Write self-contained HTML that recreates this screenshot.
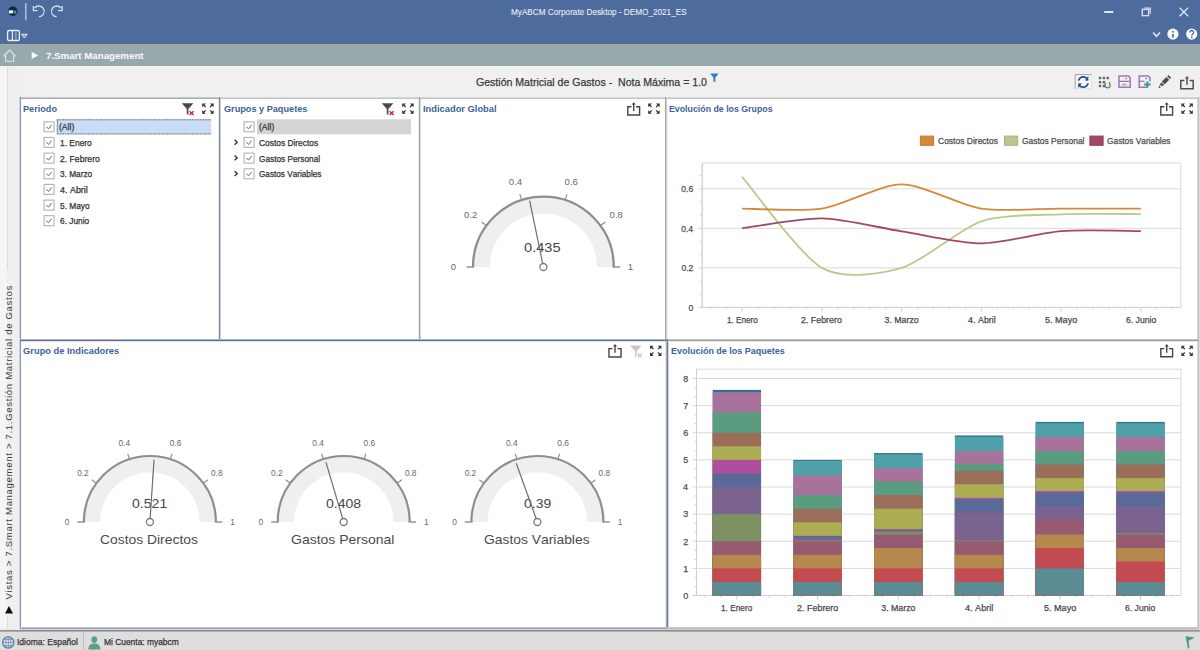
<!DOCTYPE html>
<html><head><meta charset="utf-8"><title>MyABCM</title>
<style>
*{box-sizing:border-box}
html,body{margin:0;padding:0}
body{width:1200px;height:650px;position:relative;overflow:hidden;background:#f0f0f0;font-family:"Liberation Sans",sans-serif;color:#333}
.abs{position:absolute}
.t{position:absolute;white-space:nowrap;line-height:1;font-kerning:none;-webkit-text-stroke:0.25px currentColor}
svg.ov{position:absolute;left:0;top:0}
</style></head><body>

<div class="abs" style="left:0px;top:0px;width:1200px;height:44px;background:#4d6b9c"></div>
<div class="abs" style="left:0px;top:44px;width:1200px;height:1px;background:#a2a8ae"></div>
<div class="abs" style="left:0px;top:45px;width:1200px;height:1px;background:#9ea8ad"></div>
<div class="abs" style="left:0px;top:46px;width:1200px;height:19px;background:#97a9ad"></div>
<div class="abs" style="left:0px;top:65px;width:1200px;height:1px;background:#92a7a9"></div>
<div class="abs" style="left:0px;top:66px;width:1200px;height:1px;background:#f6f0f0"></div>
<div class="t" style="left:511.43px;top:6.80px;font-size:9.4px;color:#e8edf5;font-weight:normal;font-family:'Liberation Sans', sans-serif;transform:scaleX(0.8733);transform-origin:0 0;-webkit-text-stroke:0.1px currentColor;">MyABCM Corporate Desktop - DEMO_2021_ES</div>
<div class="t" style="left:45.88px;top:50.60px;font-size:9.8px;color:#fbfbfb;font-weight:bold;font-family:'Liberation Sans', sans-serif;transform:scaleX(0.9897);transform-origin:0 0;-webkit-text-stroke:0;">7.Smart Management</div>
<div class="abs" style="left:0px;top:67px;width:7px;height:563px;background:#f5f5f5"></div>
<div class="abs" style="left:7px;top:67px;width:1px;height:203px;background:#dcdcdc"></div>
<div class="abs" style="left:7px;top:615px;width:1px;height:15px;background:#dcdcdc"></div>
<div class="abs" style="left:8px;top:67px;width:10px;height:563px;background:#efefef"></div>
<div class="abs" style="left:18px;top:67px;width:1px;height:563px;background:#f4f0f0"></div>
<div class="t" style="left:475.77px;top:76.50px;font-size:11.0px;color:#3a3a3a;font-weight:normal;font-family:'Liberation Sans', sans-serif;transform:scaleX(0.9600);transform-origin:0 0;">Gestión Matricial de Gastos -  Nota Máxima = 1.0</div>
<div class="abs" style="left:0px;top:628px;width:1200px;height:2px;background:#ececec"></div>
<div class="abs" style="left:0px;top:630px;width:1200px;height:1px;background:#8f9090"></div>
<div class="abs" style="left:0px;top:631px;width:1200px;height:1px;background:#acaaac"></div>
<div class="abs" style="left:0px;top:632px;width:1200px;height:18px;background:#dedede"></div>
<div class="t" style="left:17.12px;top:637.50px;font-size:9.0px;color:#333;font-weight:normal;font-family:'Liberation Sans', sans-serif;transform:scaleX(0.9443);transform-origin:0 0;">Idioma: Español</div>
<div class="abs" style="left:83px;top:632px;width:1px;height:18px;background:#bdbdbd"></div>
<div class="t" style="left:103.81px;top:637.50px;font-size:9.0px;color:#333;font-weight:normal;font-family:'Liberation Sans', sans-serif;transform:scaleX(0.9339);transform-origin:0 0;">Mi Cuenta: myabcm</div>
<div class="abs" style="left:21px;top:99px;width:1177px;height:528px;background:#ffffff"></div>
<div class="abs" style="left:20px;top:97px;width:200px;height:1px;background:#c6ccd6"></div>
<div class="abs" style="left:20px;top:98px;width:200px;height:1px;background:#a3a9b5"></div>
<div class="abs" style="left:220px;top:97px;width:979px;height:1px;background:#d6d6d6"></div>
<div class="abs" style="left:220px;top:98px;width:979px;height:1px;background:#c4c4c4"></div>
<div class="abs" style="left:19px;top:97px;width:1px;height:532px;background:#c8d4e4"></div>
<div class="abs" style="left:20px;top:97px;width:1px;height:532px;background:#8795ad"></div>
<div class="abs" style="left:218px;top:99px;width:1px;height:241px;background:#e6edf6"></div>
<div class="abs" style="left:219px;top:97px;width:1px;height:243px;background:#7a8496"></div>
<div class="abs" style="left:220px;top:99px;width:1px;height:241px;background:#cdd0d8"></div>
<div class="abs" style="left:418px;top:99px;width:1px;height:241px;background:#ececec"></div>
<div class="abs" style="left:419px;top:97px;width:1px;height:243px;background:#a3a3a3"></div>
<div class="abs" style="left:420px;top:99px;width:1px;height:241px;background:#d8d8d8"></div>
<div class="abs" style="left:665px;top:97px;width:1px;height:243px;background:#a2a2a2"></div>
<div class="abs" style="left:666px;top:97px;width:1px;height:243px;background:#d2d2d2"></div>
<div class="abs" style="left:667px;top:99px;width:1px;height:240px;background:#f2f2f2"></div>
<div class="abs" style="left:1197px;top:97px;width:1px;height:532px;background:#dadada"></div>
<div class="abs" style="left:1198px;top:97px;width:1px;height:532px;background:#c0c0c0"></div>
<div class="abs" style="left:1199px;top:97px;width:1px;height:532px;background:#dcdcdc"></div>
<div class="abs" style="left:20px;top:339px;width:647px;height:1px;background:#a9b6ca"></div>
<div class="abs" style="left:20px;top:340px;width:647px;height:1px;background:#5c7199"></div>
<div class="abs" style="left:21px;top:341px;width:645px;height:1px;background:#dfe5ee"></div>
<div class="abs" style="left:668px;top:339px;width:531px;height:1px;background:#c0c0c0"></div>
<div class="abs" style="left:668px;top:340px;width:531px;height:1px;background:#a0a0a0"></div>
<div class="abs" style="left:669px;top:341px;width:529px;height:1px;background:#e6e6e6"></div>
<div class="abs" style="left:665px;top:342px;width:1px;height:285px;background:#e4e9f0"></div>
<div class="abs" style="left:666px;top:341px;width:1px;height:287px;background:#a5aec4"></div>
<div class="abs" style="left:667px;top:339px;width:1px;height:290px;background:#747b96"></div>
<div class="abs" style="left:668px;top:342px;width:1px;height:285px;background:#d0d4dc"></div>
<div class="abs" style="left:20px;top:627px;width:648px;height:1px;background:#b8c2d0"></div>
<div class="abs" style="left:20px;top:628px;width:648px;height:1px;background:#98a4b8"></div>
<div class="abs" style="left:20px;top:629px;width:648px;height:1px;background:#d0d4d6"></div>
<div class="abs" style="left:668px;top:627px;width:531px;height:1px;background:#c8c8c8"></div>
<div class="abs" style="left:668px;top:628px;width:531px;height:1px;background:#c0c0c0"></div>
<div class="abs" style="left:668px;top:629px;width:531px;height:1px;background:#d0d0d0"></div>
<div class="t" style="left:23.39px;top:105.35px;font-size:9.3px;color:#3d619a;font-weight:bold;font-family:'Liberation Sans', sans-serif;transform:scaleX(0.9814);transform-origin:0 0;-webkit-text-stroke:0;">Periodo</div>
<div class="t" style="left:223.52px;top:105.35px;font-size:9.3px;color:#3d619a;font-weight:bold;font-family:'Liberation Sans', sans-serif;transform:scaleX(0.9837);transform-origin:0 0;-webkit-text-stroke:0;">Grupos y Paquetes</div>
<div class="t" style="left:422.88px;top:105.35px;font-size:9.3px;color:#3d619a;font-weight:bold;font-family:'Liberation Sans', sans-serif;transform:scaleX(1.0031);transform-origin:0 0;-webkit-text-stroke:0;">Indicador Global</div>
<div class="t" style="left:669.31px;top:105.35px;font-size:9.3px;color:#3d619a;font-weight:bold;font-family:'Liberation Sans', sans-serif;transform:scaleX(0.9455);transform-origin:0 0;-webkit-text-stroke:0;">Evolución de los Grupos</div>
<div class="t" style="left:23.12px;top:347.35px;font-size:9.3px;color:#3d619a;font-weight:bold;font-family:'Liberation Sans', sans-serif;-webkit-text-stroke:0;">Grupo de Indicadores</div>
<div class="t" style="left:671.10px;top:347.35px;font-size:9.3px;color:#3d619a;font-weight:bold;font-family:'Liberation Sans', sans-serif;transform:scaleX(0.9650);transform-origin:0 0;-webkit-text-stroke:0;">Evolución de los Paquetes</div>
<div class="abs" style="left:0px;top:42px;width:1200px;height:1px;background:#4a6b9f"></div>
<div class="abs" style="left:0px;top:43px;width:1200px;height:1px;background:#5a6c8a"></div>
<svg class="ov" width="1200" height="650" viewBox="0 0 1200 650"><circle cx="12.8" cy="11.2" r="4.7" fill="#0f2452"/><rect x="8.8" y="10.3" width="4.4" height="3.1" fill="#f4f6f0"/><rect x="14.2" y="10.6" width="2.1" height="3" fill="#5cb040"/><line x1="25.8" y1="3" x2="25.8" y2="20.2" stroke="#b9c8df" stroke-width="1.4"/><path d="M34.6 8.2 A5.3 5.3 0 1 1 38.9 16.6" fill="none" stroke="#d3dbec" stroke-width="1.3"/><path d="M33.4 5.9 L33.4 10.6 L37.6 10.6" fill="none" stroke="#d3dbec" stroke-width="1.4"/><path d="M61.0 8.2 A5.3 5.3 0 1 0 56.7 16.6" fill="none" stroke="#d3dbec" stroke-width="1.3"/><path d="M62.2 5.9 L62.2 10.6 L58.0 10.6" fill="none" stroke="#d3dbec" stroke-width="1.4"/><rect x="7.6" y="30.5" width="11.8" height="10" rx="1.6" fill="none" stroke="#eef2fa" stroke-width="1.3"/><line x1="12.4" y1="31" x2="12.4" y2="40.2" stroke="#eef2fa" stroke-width="1.1"/><line x1="15.9" y1="32" x2="15.9" y2="39.5" stroke="#aab8d6" stroke-width="1"/><path d="M21.6 34.3 L27.1 34.3 L24.35 38 Z" fill="#8090b8" stroke="#eef2fa" stroke-width="1"/><rect x="1104.2" y="11" width="9.2" height="2" fill="#dfe5f3"/><rect x="1142.3" y="9.3" width="6.3" height="6.4" fill="none" stroke="#dfe5f3" stroke-width="1.3"/><path d="M1144.2 8.0 L1150.2 8.0 L1150.2 13.8" fill="none" stroke="#dfe5f3" stroke-width="1.2"/><path d="M1179.6 7.6 L1188.2 16.2 M1188.2 7.6 L1179.6 16.2" stroke="#e6ebf6" stroke-width="1.3"/><path d="M1153 32.6 L1156.5 36.3 L1160 32.6" fill="none" stroke="#e6ebf6" stroke-width="1.5"/><circle cx="1172.9" cy="34.1" r="5.6" fill="#fafbfd"/><rect x="1172.1" y="34" width="1.7" height="3.6" fill="#4f6a98"/><rect x="1172.1" y="30.9" width="1.7" height="1.7" fill="#4f6a98"/><circle cx="1191.7" cy="34.1" r="5.6" fill="#fafbfd"/><path d="M1189.8 32.4 A1.95 1.95 0 1 1 1192.6 34.2 Q1191.7 34.7 1191.7 35.8" fill="none" stroke="#4f6a98" stroke-width="1.3"/><rect x="1191" y="36.6" width="1.5" height="1.5" fill="#4f6a98"/><path d="M3.9 56 L9.6 50 L15.3 56 L13.6 56 L13.6 61.2 L5.6 61.2 L5.6 56 Z" fill="none" stroke="#dfe6e7" stroke-width="1.1" stroke-linejoin="round"/><path d="M31.7 51.8 L38 55.4 L31.7 59 Z" fill="#fbfbfb"/><text x="0" y="0" transform="translate(12 599.4) rotate(-90)" font-family="Liberation Sans" font-size="9.6" fill="#3b3b3b" textLength="313.6" lengthAdjust="spacing">Vistas &gt; 7.Smart Management &gt; 7.1.Gestión Matricial de Gastos</text><path d="M5 613.5 L9 606 L13 613.5 Z" fill="#111"/><path d="M710.2 73.4 L718.6 73.4 L715.4 77.4 L715.4 81.8 L713.4 81.8 L713.4 77.4 Z" fill="#3a78c0"/><rect x="1075" y="74.5" width="16.6" height="14.3" fill="#f7f7f7"/><path d="M1075.2 88.8 L1075.2 74.6 L1091.6 74.6" fill="none" stroke="#a4a4a4" stroke-width="1"/><path d="M1075.6 88.6 L1091.6 88.6 L1091.6 74.9" fill="none" stroke="#e2e2e2" stroke-width="1"/><path d="M1078.4 80.6 Q1080 76.6 1083.6 76.8 Q1086 77 1087.2 78.6" fill="none" stroke="#1f4e96" stroke-width="1.7"/><path d="M1088.4 76.0 L1088.4 80.8 L1084.8 80.6 Z" fill="#1f4e96"/><path d="M1088.2 83.2 Q1086.6 87.4 1083.0 87.2 Q1080.6 87 1079.4 85.4" fill="none" stroke="#1f4e96" stroke-width="1.7"/><path d="M1078.2 88.2 L1078.2 83.2 L1081.8 83.4 Z" fill="#1f4e96"/><rect x="1098.8" y="76.8" width="2.4" height="2.4" fill="#676767"/><rect x="1098.8" y="81.0" width="2.4" height="2.4" fill="#676767"/><rect x="1098.8" y="84.8" width="2.4" height="2.4" fill="#676767"/><rect x="1102.7" y="76.8" width="2.4" height="2.4" fill="#676767"/><rect x="1102.7" y="81.0" width="2.4" height="2.4" fill="#676767"/><rect x="1102.7" y="84.8" width="2.4" height="2.4" fill="#676767"/><rect x="1106.5" y="76.8" width="2.4" height="2.4" fill="#676767"/><path d="M1109.5 83.6 A2.6 2.6 0 1 1 1106.0 83.2" fill="none" stroke="#707070" stroke-width="1.3"/><path d="M1108.2 82.0 L1110.4 82.2 L1110 84.6 Z" fill="#707070"/><path d="M1119 76 L1128.4 76 L1130.2 77.8 L1130.2 87.3 L1119 87.3 Z" fill="none" stroke="#a672bd" stroke-width="1.5"/><line x1="1119.5" y1="81.3" x2="1129.6" y2="81.3" stroke="#8a6a9a" stroke-width="1.1"/><rect x="1125.5" y="77.8" width="1.4" height="1.4" fill="#7a6a88"/><rect x="1122" y="83.6" width="4.6" height="2" fill="#b8aabd"/><path d="M1147 87.3 L1139.2 87.3 L1139.2 76 L1148.4 76 L1150 77.6 L1150 81.5" fill="none" stroke="#a672bd" stroke-width="1.5"/><line x1="1139.6" y1="81.3" x2="1144.5" y2="81.3" stroke="#8a6a9a" stroke-width="1.1"/><rect x="1145.6" y="77.8" width="1.4" height="1.4" fill="#7a6a88"/><path d="M1147.4 81.4 L1147.4 87.8 M1144.2 84.6 L1150.6 84.6" stroke="#3a9a88" stroke-width="2"/><path d="M1161.8 81.6 L1166.4 77 L1169.2 79.8 L1164.6 84.4 Z" fill="#4a4d55"/><path d="M1167.2 76.2 L1168.4 75 L1171.2 77.8 L1170 79 Z" fill="#4a4d55"/><path d="M1161.2 82.2 L1164 85 L1159.2 88.2 L1158.6 87.6 Z" fill="#4a4d55"/><path d="M1160.0 85.5 L1161.8 87.1" stroke="#ffffff" stroke-width="1.1"/><path d="M1184.4 80.6 L1180.8 80.6 L1180.8 88.8 L1193.2 88.8 L1193.2 80.6 L1189.6 80.6" fill="none" stroke="#505050" stroke-width="1.5"/><line x1="1187.0" y1="84.8" x2="1187.0" y2="77.8" stroke="#505050" stroke-width="1.5"/><path d="M1185.0 78.4 L1187.0 76.1 L1189.0 78.4 Z" fill="#505050"/><path d="M181.8 103.2 L193.4 103.2 L188.4 109.0 L188.4 114.6 L186.8 114.6 L186.8 109.0 Z" fill="#4a4a4a"/><path d="M189.6 111.2 L193.6 115.0 M193.6 111.2 L189.6 115.0" stroke="#d0202c" stroke-width="1.3"/><path d="M202.2 103.6 L205.8 103.6 L202.2 107.2 Z" fill="#333"/><line x1="203.2" y1="104.6" x2="205.6" y2="107.0" stroke="#333" stroke-width="1.3"/><path d="M213.6 103.6 L210.0 103.6 L213.6 107.2 Z" fill="#333"/><line x1="212.6" y1="104.6" x2="210.2" y2="107.0" stroke="#333" stroke-width="1.3"/><path d="M202.2 113.8 L205.8 113.8 L202.2 110.2 Z" fill="#333"/><line x1="203.2" y1="112.8" x2="205.6" y2="110.4" stroke="#333" stroke-width="1.3"/><path d="M213.6 113.8 L210.0 113.8 L213.6 110.2 Z" fill="#333"/><line x1="212.6" y1="112.8" x2="210.2" y2="110.4" stroke="#333" stroke-width="1.3"/><path d="M381.8 103.2 L393.4 103.2 L388.4 109.0 L388.4 114.6 L386.8 114.6 L386.8 109.0 Z" fill="#4a4a4a"/><path d="M389.6 111.2 L393.6 115.0 M393.6 111.2 L389.6 115.0" stroke="#d0202c" stroke-width="1.3"/><path d="M402.2 103.6 L405.8 103.6 L402.2 107.2 Z" fill="#333"/><line x1="403.2" y1="104.6" x2="405.6" y2="107.0" stroke="#333" stroke-width="1.3"/><path d="M413.6 103.6 L410.0 103.6 L413.6 107.2 Z" fill="#333"/><line x1="412.6" y1="104.6" x2="410.2" y2="107.0" stroke="#333" stroke-width="1.3"/><path d="M402.2 113.8 L405.8 113.8 L402.2 110.2 Z" fill="#333"/><line x1="403.2" y1="112.8" x2="405.6" y2="110.4" stroke="#333" stroke-width="1.3"/><path d="M413.6 113.8 L410.0 113.8 L413.6 110.2 Z" fill="#333"/><line x1="412.6" y1="112.8" x2="410.2" y2="110.4" stroke="#333" stroke-width="1.3"/><path d="M631.4 106.8 L627.8 106.8 L627.8 115.0 L639.6 115.0 L639.6 106.8 L636.0 106.8" fill="none" stroke="#444" stroke-width="1.4"/><line x1="633.7" y1="111.0" x2="633.7" y2="104.0" stroke="#444" stroke-width="1.4"/><path d="M631.7 104.6 L633.7 102.3 L635.7 104.6 Z" fill="#444"/><path d="M648.2 103.6 L651.8 103.6 L648.2 107.2 Z" fill="#333"/><line x1="649.2" y1="104.6" x2="651.6" y2="107.0" stroke="#333" stroke-width="1.3"/><path d="M659.6 103.6 L656.0 103.6 L659.6 107.2 Z" fill="#333"/><line x1="658.6" y1="104.6" x2="656.2" y2="107.0" stroke="#333" stroke-width="1.3"/><path d="M648.2 113.8 L651.8 113.8 L648.2 110.2 Z" fill="#333"/><line x1="649.2" y1="112.8" x2="651.6" y2="110.4" stroke="#333" stroke-width="1.3"/><path d="M659.6 113.8 L656.0 113.8 L659.6 110.2 Z" fill="#333"/><line x1="658.6" y1="112.8" x2="656.2" y2="110.4" stroke="#333" stroke-width="1.3"/><path d="M1164.4 106.8 L1160.8 106.8 L1160.8 115.0 L1172.6 115.0 L1172.6 106.8 L1169.0 106.8" fill="none" stroke="#444" stroke-width="1.4"/><line x1="1166.7" y1="111.0" x2="1166.7" y2="104.0" stroke="#444" stroke-width="1.4"/><path d="M1164.7 104.6 L1166.7 102.3 L1168.7 104.6 Z" fill="#444"/><path d="M1181.4 103.6 L1185.0 103.6 L1181.4 107.2 Z" fill="#333"/><line x1="1182.4" y1="104.6" x2="1184.8" y2="107.0" stroke="#333" stroke-width="1.3"/><path d="M1192.8 103.6 L1189.2 103.6 L1192.8 107.2 Z" fill="#333"/><line x1="1191.8" y1="104.6" x2="1189.4" y2="107.0" stroke="#333" stroke-width="1.3"/><path d="M1181.4 113.8 L1185.0 113.8 L1181.4 110.2 Z" fill="#333"/><line x1="1182.4" y1="112.8" x2="1184.8" y2="110.4" stroke="#333" stroke-width="1.3"/><path d="M1192.8 113.8 L1189.2 113.8 L1192.8 110.2 Z" fill="#333"/><line x1="1191.8" y1="112.8" x2="1189.4" y2="110.4" stroke="#333" stroke-width="1.3"/><path d="M612.6 348.6 L609.0 348.6 L609.0 357.0 L621.0 357.0 L621.0 348.6 L617.4 348.6" fill="none" stroke="#444" stroke-width="1.4"/><line x1="615.0" y1="352.8" x2="615.0" y2="345.8" stroke="#444" stroke-width="1.4"/><path d="M613.0 346.4 L615.0 344.1 L617.0 346.4 Z" fill="#444"/><path d="M630.0 345.4 L641.6 345.4 L636.6 351.2 L636.6 356.8 L635.0 356.8 L635.0 351.2 Z" fill="#c8c8c8"/><path d="M637.8 353.4 L641.8 357.2 M641.8 353.4 L637.8 357.2" stroke="#c8c8c8" stroke-width="1.3"/><path d="M650.0 345.7 L653.6 345.7 L650.0 349.3 Z" fill="#333"/><line x1="651.0" y1="346.7" x2="653.4" y2="349.1" stroke="#333" stroke-width="1.3"/><path d="M661.4 345.7 L657.8 345.7 L661.4 349.3 Z" fill="#333"/><line x1="660.4" y1="346.7" x2="658.0" y2="349.1" stroke="#333" stroke-width="1.3"/><path d="M650.0 355.9 L653.6 355.9 L650.0 352.3 Z" fill="#333"/><line x1="651.0" y1="354.9" x2="653.4" y2="352.5" stroke="#333" stroke-width="1.3"/><path d="M661.4 355.9 L657.8 355.9 L661.4 352.3 Z" fill="#333"/><line x1="660.4" y1="354.9" x2="658.0" y2="352.5" stroke="#333" stroke-width="1.3"/><path d="M1164.4 348.6 L1160.8 348.6 L1160.8 356.8 L1172.6 356.8 L1172.6 348.6 L1169.0 348.6" fill="none" stroke="#444" stroke-width="1.4"/><line x1="1166.7" y1="352.8" x2="1166.7" y2="345.8" stroke="#444" stroke-width="1.4"/><path d="M1164.7 346.4 L1166.7 344.1 L1168.7 346.4 Z" fill="#444"/><path d="M1181.4 345.7 L1185.0 345.7 L1181.4 349.3 Z" fill="#333"/><line x1="1182.4" y1="346.7" x2="1184.8" y2="349.1" stroke="#333" stroke-width="1.3"/><path d="M1192.8 345.7 L1189.2 345.7 L1192.8 349.3 Z" fill="#333"/><line x1="1191.8" y1="346.7" x2="1189.4" y2="349.1" stroke="#333" stroke-width="1.3"/><path d="M1181.4 355.9 L1185.0 355.9 L1181.4 352.3 Z" fill="#333"/><line x1="1182.4" y1="354.9" x2="1184.8" y2="352.5" stroke="#333" stroke-width="1.3"/><path d="M1192.8 355.9 L1189.2 355.9 L1192.8 352.3 Z" fill="#333"/><line x1="1191.8" y1="354.9" x2="1189.4" y2="352.5" stroke="#333" stroke-width="1.3"/><circle cx="8.3" cy="642.5" r="5.6" fill="#dfe6ef" stroke="#5a78a0" stroke-width="1.3"/><path d="M2.8 642.5 L13.8 642.5 M8.3 637 L8.3 648 M4 639.5 L12.6 639.5 M4 645.5 L12.6 645.5" stroke="#7a94b6" stroke-width="0.9"/><ellipse cx="8.3" cy="642.5" rx="2.6" ry="5.5" fill="none" stroke="#7a94b6" stroke-width="0.9"/><ellipse cx="94.3" cy="639.6" rx="2.9" ry="3.4" fill="#5c9e8c"/><path d="M88.2 649.5 Q88.4 644.6 92.6 643.6 L96 643.6 Q100.2 644.6 100.4 649.5 Z" fill="#5c9e8c"/><path d="M1185.5 636.2 L1194.8 637.6 L1188.6 640.8 L1189.5 648.2 L1188 648.4 Z" fill="#4c9a80"/><rect x="56.8" y="119.3" width="154.4" height="15" fill="#c9dcf5"/><path d="M56.8 119.8 L211.2 119.8 M56.8 133.9 L211.2 133.9 M57.3 119.8 L57.3 133.9" fill="none" stroke="#737a88" stroke-width="1" stroke-dasharray="2 0.6"/><rect x="44.1" y="121.8" width="10" height="10" fill="#fff" stroke="#b3b3b3" stroke-width="1.1"/><path d="M46.5 126.7 L48.5 128.9 L51.7 124.8" fill="none" stroke="#6a6a6a" stroke-width="1"/></svg>
<div class="t" style="left:59.27px;top:121.80px;font-size:9.4px;color:#303030;font-weight:normal;font-family:'Liberation Sans', sans-serif;transform:scaleX(0.9158);transform-origin:0 0;">(All)</div>
<svg class="ov" width="1200" height="650" viewBox="0 0 1200 650"><rect x="44.1" y="137.4" width="10" height="10" fill="#fff" stroke="#b3b3b3" stroke-width="1.1"/><path d="M46.5 142.3 L48.5 144.5 L51.7 140.4" fill="none" stroke="#6a6a6a" stroke-width="1"/></svg>
<div class="t" style="left:59.66px;top:137.80px;font-size:9.4px;color:#303030;font-weight:normal;font-family:'Liberation Sans', sans-serif;transform:scaleX(0.8969);transform-origin:0 0;">1. Enero</div>
<svg class="ov" width="1200" height="650" viewBox="0 0 1200 650"><rect x="44.1" y="153.1" width="10" height="10" fill="#fff" stroke="#b3b3b3" stroke-width="1.1"/><path d="M46.5 158.0 L48.5 160.2 L51.7 156.1" fill="none" stroke="#6a6a6a" stroke-width="1"/></svg>
<div class="t" style="left:59.86px;top:153.80px;font-size:9.4px;color:#303030;font-weight:normal;font-family:'Liberation Sans', sans-serif;transform:scaleX(0.9202);transform-origin:0 0;">2. Febrero</div>
<svg class="ov" width="1200" height="650" viewBox="0 0 1200 650"><rect x="44.1" y="168.8" width="10" height="10" fill="#fff" stroke="#b3b3b3" stroke-width="1.1"/><path d="M46.5 173.7 L48.5 175.8 L51.7 171.8" fill="none" stroke="#6a6a6a" stroke-width="1"/></svg>
<div class="t" style="left:59.98px;top:168.80px;font-size:9.4px;color:#303030;font-weight:normal;font-family:'Liberation Sans', sans-serif;transform:scaleX(0.8816);transform-origin:0 0;">3. Marzo</div>
<svg class="ov" width="1200" height="650" viewBox="0 0 1200 650"><rect x="44.1" y="184.4" width="10" height="10" fill="#fff" stroke="#b3b3b3" stroke-width="1.1"/><path d="M46.5 189.3 L48.5 191.5 L51.7 187.4" fill="none" stroke="#6a6a6a" stroke-width="1"/></svg>
<div class="t" style="left:60.09px;top:184.80px;font-size:9.4px;color:#303030;font-weight:normal;font-family:'Liberation Sans', sans-serif;transform:scaleX(0.9526);transform-origin:0 0;">4. Abril</div>
<svg class="ov" width="1200" height="650" viewBox="0 0 1200 650"><rect x="44.1" y="200.1" width="10" height="10" fill="#fff" stroke="#b3b3b3" stroke-width="1.1"/><path d="M46.5 205.0 L48.5 207.2 L51.7 203.1" fill="none" stroke="#6a6a6a" stroke-width="1"/></svg>
<div class="t" style="left:59.97px;top:200.80px;font-size:9.4px;color:#303030;font-weight:normal;font-family:'Liberation Sans', sans-serif;transform:scaleX(0.8899);transform-origin:0 0;">5. Mayo</div>
<svg class="ov" width="1200" height="650" viewBox="0 0 1200 650"><rect x="44.1" y="215.7" width="10" height="10" fill="#fff" stroke="#b3b3b3" stroke-width="1.1"/><path d="M46.5 220.6 L48.5 222.8 L51.7 218.7" fill="none" stroke="#6a6a6a" stroke-width="1"/></svg>
<div class="t" style="left:59.87px;top:215.80px;font-size:9.4px;color:#303030;font-weight:normal;font-family:'Liberation Sans', sans-serif;transform:scaleX(0.8914);transform-origin:0 0;">6. Junio</div>
<svg class="ov" width="1200" height="650" viewBox="0 0 1200 650"><rect x="257" y="119.3" width="154" height="15" fill="#d4d4d4"/><rect x="244.1" y="121.8" width="10" height="10" fill="#fff" stroke="#b3b3b3" stroke-width="1.1"/><path d="M246.5 126.7 L248.5 128.9 L251.7 124.8" fill="none" stroke="#6a6a6a" stroke-width="1"/></svg>
<div class="t" style="left:259.07px;top:121.80px;font-size:9.4px;color:#303030;font-weight:normal;font-family:'Liberation Sans', sans-serif;transform:scaleX(0.9158);transform-origin:0 0;">(All)</div>
<svg class="ov" width="1200" height="650" viewBox="0 0 1200 650"><rect x="244.1" y="137.4" width="10" height="10" fill="#fff" stroke="#b3b3b3" stroke-width="1.1"/><path d="M246.5 142.3 L248.5 144.5 L251.7 140.4" fill="none" stroke="#6a6a6a" stroke-width="1"/></svg>
<div class="t" style="left:259.17px;top:137.80px;font-size:9.4px;color:#303030;font-weight:normal;font-family:'Liberation Sans', sans-serif;transform:scaleX(0.8936);transform-origin:0 0;">Costos Directos</div>
<svg class="ov" width="1200" height="650" viewBox="0 0 1200 650"><path d="M234.6 139.8 L237.2 142.2 L234.6 144.7" fill="none" stroke="#3a3a3a" stroke-width="1.4"/><rect x="244.1" y="153.1" width="10" height="10" fill="#fff" stroke="#b3b3b3" stroke-width="1.1"/><path d="M246.5 158.0 L248.5 160.2 L251.7 156.1" fill="none" stroke="#6a6a6a" stroke-width="1"/></svg>
<div class="t" style="left:259.18px;top:153.80px;font-size:9.4px;color:#303030;font-weight:normal;font-family:'Liberation Sans', sans-serif;transform:scaleX(0.8811);transform-origin:0 0;">Gastos Personal</div>
<svg class="ov" width="1200" height="650" viewBox="0 0 1200 650"><path d="M234.6 155.5 L237.2 157.9 L234.6 160.3" fill="none" stroke="#3a3a3a" stroke-width="1.4"/><rect x="244.1" y="168.8" width="10" height="10" fill="#fff" stroke="#b3b3b3" stroke-width="1.1"/><path d="M246.5 173.7 L248.5 175.8 L251.7 171.8" fill="none" stroke="#6a6a6a" stroke-width="1"/></svg>
<div class="t" style="left:259.19px;top:168.80px;font-size:9.4px;color:#303030;font-weight:normal;font-family:'Liberation Sans', sans-serif;transform:scaleX(0.8742);transform-origin:0 0;">Gastos Variables</div>
<svg class="ov" width="1200" height="650" viewBox="0 0 1200 650"><path d="M234.6 171.2 L237.2 173.6 L234.6 176.0" fill="none" stroke="#3a3a3a" stroke-width="1.4"/><path d="M473.00 267.00 A70.4 70.4 0 0 1 613.80 267.00 L597.00 267.00 A53.6 53.6 0 0 0 489.80 267.00 Z" fill="#efefef"/><path d="M473.00 267.00 A70.4 70.4 0 0 1 613.80 267.00" fill="none" stroke="#8e8e8e" stroke-width="2.3"/><line x1="466.50" y1="267.00" x2="474.15" y2="267.00" stroke="#8e8e8e" stroke-width="1.4"/><line x1="612.65" y1="267.00" x2="620.30" y2="267.00" stroke="#8e8e8e" stroke-width="1.4"/><line x1="486.36" y1="225.56" x2="481.51" y2="222.03" stroke="#8e8e8e" stroke-width="1.1"/><line x1="521.61" y1="199.95" x2="519.76" y2="194.24" stroke="#8e8e8e" stroke-width="1.1"/><line x1="565.19" y1="199.95" x2="567.04" y2="194.24" stroke="#8e8e8e" stroke-width="1.1"/><line x1="600.44" y1="225.56" x2="605.29" y2="222.03" stroke="#8e8e8e" stroke-width="1.1"/></svg>
<div class="t" style="left:450.73px;top:261.70px;font-size:9.6px;color:#6a6a6a;font-weight:normal;font-family:'Liberation Sans', sans-serif;-webkit-text-stroke:0;">0</div>
<div class="t" style="left:463.97px;top:209.70px;font-size:9.6px;color:#6a6a6a;font-weight:normal;font-family:'Liberation Sans', sans-serif;-webkit-text-stroke:0;">0.2</div>
<div class="t" style="left:508.87px;top:176.70px;font-size:9.6px;color:#6a6a6a;font-weight:normal;font-family:'Liberation Sans', sans-serif;-webkit-text-stroke:0;">0.4</div>
<div class="t" style="left:564.56px;top:176.70px;font-size:9.6px;color:#6a6a6a;font-weight:normal;font-family:'Liberation Sans', sans-serif;-webkit-text-stroke:0;">0.6</div>
<div class="t" style="left:609.56px;top:209.70px;font-size:9.6px;color:#6a6a6a;font-weight:normal;font-family:'Liberation Sans', sans-serif;-webkit-text-stroke:0;">0.8</div>
<div class="t" style="left:627.80px;top:261.70px;font-size:9.6px;color:#6a6a6a;font-weight:normal;font-family:'Liberation Sans', sans-serif;-webkit-text-stroke:0;">1</div>
<div class="t" style="left:523.83px;top:240.90px;font-size:13.2px;color:#454545;font-weight:normal;font-family:'Liberation Sans', sans-serif;transform:scaleX(1.1081);transform-origin:0 0;-webkit-text-stroke:0;">0.435</div>
<svg class="ov" width="1200" height="650" viewBox="0 0 1200 650"><line x1="543.40" y1="267.00" x2="529.65" y2="200.61" stroke="#6e6e6e" stroke-width="1.2"/><circle cx="543.40" cy="267.00" r="3.5" fill="#fff" stroke="#7a7a7a" stroke-width="1.3"/><path d="M83.90 522.00 A66.0 66.0 0 0 1 215.90 522.00 L199.60 522.00 A49.7 49.7 0 0 0 100.20 522.00 Z" fill="#efefef"/><path d="M83.90 522.00 A66.0 66.0 0 0 1 215.90 522.00" fill="none" stroke="#8e8e8e" stroke-width="2.2"/><line x1="77.40" y1="522.00" x2="85.00" y2="522.00" stroke="#8e8e8e" stroke-width="1.4"/><line x1="214.80" y1="522.00" x2="222.40" y2="522.00" stroke="#8e8e8e" stroke-width="1.4"/><line x1="96.50" y1="483.21" x2="91.81" y2="479.80" stroke="#8e8e8e" stroke-width="1.1"/><line x1="129.50" y1="459.23" x2="127.71" y2="453.71" stroke="#8e8e8e" stroke-width="1.1"/><line x1="170.30" y1="459.23" x2="172.09" y2="453.71" stroke="#8e8e8e" stroke-width="1.1"/><line x1="203.30" y1="483.21" x2="207.99" y2="479.80" stroke="#8e8e8e" stroke-width="1.1"/></svg>
<div class="t" style="left:64.76px;top:517.80px;font-size:8.4px;color:#6a6a6a;font-weight:normal;font-family:'Liberation Sans', sans-serif;-webkit-text-stroke:0;">0</div>
<div class="t" style="left:77.13px;top:468.80px;font-size:8.4px;color:#6a6a6a;font-weight:normal;font-family:'Liberation Sans', sans-serif;-webkit-text-stroke:0;">0.2</div>
<div class="t" style="left:118.44px;top:438.80px;font-size:8.4px;color:#6a6a6a;font-weight:normal;font-family:'Liberation Sans', sans-serif;-webkit-text-stroke:0;">0.4</div>
<div class="t" style="left:169.68px;top:438.80px;font-size:8.4px;color:#6a6a6a;font-weight:normal;font-family:'Liberation Sans', sans-serif;-webkit-text-stroke:0;">0.6</div>
<div class="t" style="left:211.08px;top:468.80px;font-size:8.4px;color:#6a6a6a;font-weight:normal;font-family:'Liberation Sans', sans-serif;-webkit-text-stroke:0;">0.8</div>
<div class="t" style="left:230.25px;top:517.80px;font-size:8.4px;color:#6a6a6a;font-weight:normal;font-family:'Liberation Sans', sans-serif;-webkit-text-stroke:0;">1</div>
<div class="t" style="left:132.35px;top:497.00px;font-size:13.0px;color:#454545;font-weight:normal;font-family:'Liberation Sans', sans-serif;transform:scaleX(1.0827);transform-origin:0 0;-webkit-text-stroke:0;">0.521</div>
<svg class="ov" width="1200" height="650" viewBox="0 0 1200 650"><line x1="149.90" y1="522.00" x2="154.02" y2="459.64" stroke="#6e6e6e" stroke-width="1.2"/><circle cx="149.90" cy="522.00" r="3.5" fill="#fff" stroke="#7a7a7a" stroke-width="1.3"/></svg>
<div class="t" style="left:100.30px;top:532.70px;font-size:13.6px;color:#4a4a4a;font-weight:normal;font-family:'Liberation Sans', sans-serif;transform:scaleX(1.0204);transform-origin:0 0;-webkit-text-stroke:0;">Costos Directos</div>
<svg class="ov" width="1200" height="650" viewBox="0 0 1200 650"><path d="M277.70 522.00 A66.0 66.0 0 0 1 409.70 522.00 L393.40 522.00 A49.7 49.7 0 0 0 294.00 522.00 Z" fill="#efefef"/><path d="M277.70 522.00 A66.0 66.0 0 0 1 409.70 522.00" fill="none" stroke="#8e8e8e" stroke-width="2.2"/><line x1="271.20" y1="522.00" x2="278.80" y2="522.00" stroke="#8e8e8e" stroke-width="1.4"/><line x1="408.60" y1="522.00" x2="416.20" y2="522.00" stroke="#8e8e8e" stroke-width="1.4"/><line x1="290.30" y1="483.21" x2="285.61" y2="479.80" stroke="#8e8e8e" stroke-width="1.1"/><line x1="323.30" y1="459.23" x2="321.51" y2="453.71" stroke="#8e8e8e" stroke-width="1.1"/><line x1="364.10" y1="459.23" x2="365.89" y2="453.71" stroke="#8e8e8e" stroke-width="1.1"/><line x1="397.10" y1="483.21" x2="401.79" y2="479.80" stroke="#8e8e8e" stroke-width="1.1"/></svg>
<div class="t" style="left:258.56px;top:517.80px;font-size:8.4px;color:#6a6a6a;font-weight:normal;font-family:'Liberation Sans', sans-serif;-webkit-text-stroke:0;">0</div>
<div class="t" style="left:270.93px;top:468.80px;font-size:8.4px;color:#6a6a6a;font-weight:normal;font-family:'Liberation Sans', sans-serif;-webkit-text-stroke:0;">0.2</div>
<div class="t" style="left:312.24px;top:438.80px;font-size:8.4px;color:#6a6a6a;font-weight:normal;font-family:'Liberation Sans', sans-serif;-webkit-text-stroke:0;">0.4</div>
<div class="t" style="left:363.48px;top:438.80px;font-size:8.4px;color:#6a6a6a;font-weight:normal;font-family:'Liberation Sans', sans-serif;-webkit-text-stroke:0;">0.6</div>
<div class="t" style="left:404.88px;top:468.80px;font-size:8.4px;color:#6a6a6a;font-weight:normal;font-family:'Liberation Sans', sans-serif;-webkit-text-stroke:0;">0.8</div>
<div class="t" style="left:424.05px;top:517.80px;font-size:8.4px;color:#6a6a6a;font-weight:normal;font-family:'Liberation Sans', sans-serif;-webkit-text-stroke:0;">1</div>
<div class="t" style="left:326.15px;top:497.00px;font-size:13.0px;color:#454545;font-weight:normal;font-family:'Liberation Sans', sans-serif;transform:scaleX(1.0803);transform-origin:0 0;-webkit-text-stroke:0;">0.408</div>
<svg class="ov" width="1200" height="650" viewBox="0 0 1200 650"><line x1="343.70" y1="522.00" x2="325.89" y2="462.09" stroke="#6e6e6e" stroke-width="1.2"/><circle cx="343.70" cy="522.00" r="3.5" fill="#fff" stroke="#7a7a7a" stroke-width="1.3"/></svg>
<div class="t" style="left:291.30px;top:532.70px;font-size:13.6px;color:#4a4a4a;font-weight:normal;font-family:'Liberation Sans', sans-serif;transform:scaleX(1.0293);transform-origin:0 0;-webkit-text-stroke:0;">Gastos Personal</div>
<svg class="ov" width="1200" height="650" viewBox="0 0 1200 650"><path d="M471.40 522.00 A66.0 66.0 0 0 1 603.40 522.00 L587.10 522.00 A49.7 49.7 0 0 0 487.70 522.00 Z" fill="#efefef"/><path d="M471.40 522.00 A66.0 66.0 0 0 1 603.40 522.00" fill="none" stroke="#8e8e8e" stroke-width="2.2"/><line x1="464.90" y1="522.00" x2="472.50" y2="522.00" stroke="#8e8e8e" stroke-width="1.4"/><line x1="602.30" y1="522.00" x2="609.90" y2="522.00" stroke="#8e8e8e" stroke-width="1.4"/><line x1="484.00" y1="483.21" x2="479.31" y2="479.80" stroke="#8e8e8e" stroke-width="1.1"/><line x1="517.00" y1="459.23" x2="515.21" y2="453.71" stroke="#8e8e8e" stroke-width="1.1"/><line x1="557.80" y1="459.23" x2="559.59" y2="453.71" stroke="#8e8e8e" stroke-width="1.1"/><line x1="590.80" y1="483.21" x2="595.49" y2="479.80" stroke="#8e8e8e" stroke-width="1.1"/></svg>
<div class="t" style="left:452.26px;top:517.80px;font-size:8.4px;color:#6a6a6a;font-weight:normal;font-family:'Liberation Sans', sans-serif;-webkit-text-stroke:0;">0</div>
<div class="t" style="left:464.63px;top:468.80px;font-size:8.4px;color:#6a6a6a;font-weight:normal;font-family:'Liberation Sans', sans-serif;-webkit-text-stroke:0;">0.2</div>
<div class="t" style="left:505.94px;top:438.80px;font-size:8.4px;color:#6a6a6a;font-weight:normal;font-family:'Liberation Sans', sans-serif;-webkit-text-stroke:0;">0.4</div>
<div class="t" style="left:557.18px;top:438.80px;font-size:8.4px;color:#6a6a6a;font-weight:normal;font-family:'Liberation Sans', sans-serif;-webkit-text-stroke:0;">0.6</div>
<div class="t" style="left:598.58px;top:468.80px;font-size:8.4px;color:#6a6a6a;font-weight:normal;font-family:'Liberation Sans', sans-serif;-webkit-text-stroke:0;">0.8</div>
<div class="t" style="left:617.75px;top:517.80px;font-size:8.4px;color:#6a6a6a;font-weight:normal;font-family:'Liberation Sans', sans-serif;-webkit-text-stroke:0;">1</div>
<div class="t" style="left:523.85px;top:497.00px;font-size:13.0px;color:#454545;font-weight:normal;font-family:'Liberation Sans', sans-serif;transform:scaleX(1.0749);transform-origin:0 0;-webkit-text-stroke:0;">0.39</div>
<svg class="ov" width="1200" height="650" viewBox="0 0 1200 650"><line x1="537.40" y1="522.00" x2="516.23" y2="463.19" stroke="#6e6e6e" stroke-width="1.2"/><circle cx="537.40" cy="522.00" r="3.5" fill="#fff" stroke="#7a7a7a" stroke-width="1.3"/></svg>
<div class="t" style="left:483.70px;top:532.70px;font-size:13.6px;color:#4a4a4a;font-weight:normal;font-family:'Liberation Sans', sans-serif;transform:scaleX(1.0201);transform-origin:0 0;-webkit-text-stroke:0;">Gastos Variables</div>
<svg class="ov" width="1200" height="650" viewBox="0 0 1200 650"><line x1="698.7" y1="267.87" x2="1180.8" y2="267.87" stroke="#d9d9d9" stroke-width="1"/><line x1="698.7" y1="228.33" x2="1180.8" y2="228.33" stroke="#d9d9d9" stroke-width="1"/><line x1="698.7" y1="188.80" x2="1180.8" y2="188.80" stroke="#d9d9d9" stroke-width="1"/><rect x="702.2" y="163.0" width="478.6" height="144.4" fill="none" stroke="#dadada" stroke-width="1"/><line x1="702.2" y1="163.0" x2="702.2" y2="307.4" stroke="#cfcfcf" stroke-width="1"/><line x1="698.7" y1="307.4" x2="1180.8" y2="307.4" stroke="#cfcfcf" stroke-width="1"/><line x1="700.2" y1="294.22" x2="702.2" y2="294.22" stroke="#cfcfcf" stroke-width="1"/><line x1="700.2" y1="281.04" x2="702.2" y2="281.04" stroke="#cfcfcf" stroke-width="1"/><line x1="700.2" y1="254.69" x2="702.2" y2="254.69" stroke="#cfcfcf" stroke-width="1"/><line x1="700.2" y1="241.51" x2="702.2" y2="241.51" stroke="#cfcfcf" stroke-width="1"/><line x1="700.2" y1="215.16" x2="702.2" y2="215.16" stroke="#cfcfcf" stroke-width="1"/><line x1="700.2" y1="201.98" x2="702.2" y2="201.98" stroke="#cfcfcf" stroke-width="1"/><line x1="700.2" y1="175.62" x2="702.2" y2="175.62" stroke="#cfcfcf" stroke-width="1"/><line x1="742.1" y1="307.4" x2="742.1" y2="311.4" stroke="#cfcfcf" stroke-width="1"/><line x1="710.2" y1="307.4" x2="710.2" y2="309.4" stroke="#cfcfcf" stroke-width="1"/><line x1="726.1" y1="307.4" x2="726.1" y2="309.4" stroke="#cfcfcf" stroke-width="1"/><line x1="758.0" y1="307.4" x2="758.0" y2="309.4" stroke="#cfcfcf" stroke-width="1"/><line x1="774.0" y1="307.4" x2="774.0" y2="309.4" stroke="#cfcfcf" stroke-width="1"/><line x1="821.9" y1="307.4" x2="821.9" y2="311.4" stroke="#cfcfcf" stroke-width="1"/><line x1="789.9" y1="307.4" x2="789.9" y2="309.4" stroke="#cfcfcf" stroke-width="1"/><line x1="805.9" y1="307.4" x2="805.9" y2="309.4" stroke="#cfcfcf" stroke-width="1"/><line x1="837.8" y1="307.4" x2="837.8" y2="309.4" stroke="#cfcfcf" stroke-width="1"/><line x1="853.8" y1="307.4" x2="853.8" y2="309.4" stroke="#cfcfcf" stroke-width="1"/><line x1="901.6" y1="307.4" x2="901.6" y2="311.4" stroke="#cfcfcf" stroke-width="1"/><line x1="869.7" y1="307.4" x2="869.7" y2="309.4" stroke="#cfcfcf" stroke-width="1"/><line x1="885.7" y1="307.4" x2="885.7" y2="309.4" stroke="#cfcfcf" stroke-width="1"/><line x1="917.6" y1="307.4" x2="917.6" y2="309.4" stroke="#cfcfcf" stroke-width="1"/><line x1="933.5" y1="307.4" x2="933.5" y2="309.4" stroke="#cfcfcf" stroke-width="1"/><line x1="981.4" y1="307.4" x2="981.4" y2="311.4" stroke="#cfcfcf" stroke-width="1"/><line x1="949.5" y1="307.4" x2="949.5" y2="309.4" stroke="#cfcfcf" stroke-width="1"/><line x1="965.4" y1="307.4" x2="965.4" y2="309.4" stroke="#cfcfcf" stroke-width="1"/><line x1="997.3" y1="307.4" x2="997.3" y2="309.4" stroke="#cfcfcf" stroke-width="1"/><line x1="1013.3" y1="307.4" x2="1013.3" y2="309.4" stroke="#cfcfcf" stroke-width="1"/><line x1="1061.2" y1="307.4" x2="1061.2" y2="311.4" stroke="#cfcfcf" stroke-width="1"/><line x1="1029.2" y1="307.4" x2="1029.2" y2="309.4" stroke="#cfcfcf" stroke-width="1"/><line x1="1045.2" y1="307.4" x2="1045.2" y2="309.4" stroke="#cfcfcf" stroke-width="1"/><line x1="1077.1" y1="307.4" x2="1077.1" y2="309.4" stroke="#cfcfcf" stroke-width="1"/><line x1="1093.1" y1="307.4" x2="1093.1" y2="309.4" stroke="#cfcfcf" stroke-width="1"/><line x1="1140.9" y1="307.4" x2="1140.9" y2="311.4" stroke="#cfcfcf" stroke-width="1"/><line x1="1109.0" y1="307.4" x2="1109.0" y2="309.4" stroke="#cfcfcf" stroke-width="1"/><line x1="1125.0" y1="307.4" x2="1125.0" y2="309.4" stroke="#cfcfcf" stroke-width="1"/><line x1="1156.9" y1="307.4" x2="1156.9" y2="309.4" stroke="#cfcfcf" stroke-width="1"/><line x1="1172.8" y1="307.4" x2="1172.8" y2="309.4" stroke="#cfcfcf" stroke-width="1"/></svg>
<div class="t" style="left:688.45px;top:303.70px;font-size:8.6px;color:#505050;font-weight:normal;font-family:'Liberation Sans', sans-serif;">0</div>
<div class="t" style="left:681.38px;top:263.70px;font-size:8.6px;color:#505050;font-weight:normal;font-family:'Liberation Sans', sans-serif;">0.2</div>
<div class="t" style="left:681.20px;top:224.70px;font-size:8.6px;color:#505050;font-weight:normal;font-family:'Liberation Sans', sans-serif;">0.4</div>
<div class="t" style="left:681.32px;top:184.70px;font-size:8.6px;color:#505050;font-weight:normal;font-family:'Liberation Sans', sans-serif;">0.6</div>
<div class="t" style="left:726.56px;top:315.60px;font-size:8.8px;color:#4a4a4a;font-weight:normal;font-family:'Liberation Sans', sans-serif;transform:scaleX(0.9247);transform-origin:0 0;">1. Enero</div>
<div class="t" style="left:801.41px;top:315.60px;font-size:8.8px;color:#4a4a4a;font-weight:normal;font-family:'Liberation Sans', sans-serif;transform:scaleX(1.0054);transform-origin:0 0;">2. Febrero</div>
<div class="t" style="left:884.53px;top:315.60px;font-size:8.8px;color:#4a4a4a;font-weight:normal;font-family:'Liberation Sans', sans-serif;">3. Marzo</div>
<div class="t" style="left:967.68px;top:315.60px;font-size:8.8px;color:#4a4a4a;font-weight:normal;font-family:'Liberation Sans', sans-serif;transform:scaleX(1.0151);transform-origin:0 0;">4. Abril</div>
<div class="t" style="left:1045.04px;top:315.60px;font-size:8.8px;color:#4a4a4a;font-weight:normal;font-family:'Liberation Sans', sans-serif;transform:scaleX(1.0301);transform-origin:0 0;">5. Mayo</div>
<div class="t" style="left:1125.73px;top:315.60px;font-size:8.8px;color:#4a4a4a;font-weight:normal;font-family:'Liberation Sans', sans-serif;transform:scaleX(0.9832);transform-origin:0 0;">6. Junio</div>
<svg class="ov" width="1200" height="650" viewBox="0 0 1200 650"><path d="M742.08 176.94 C752.72 189.06 800.58 255.74 821.85 267.87 C843.12 279.99 880.35 274.06 901.62 267.87 C922.89 261.67 960.11 228.56 981.38 221.41 C1002.65 214.27 1039.88 215.27 1061.15 214.30 C1082.42 213.32 1130.28 214.13 1140.92 214.10" fill="none" stroke="#b9ca8d" stroke-width="1.8" stroke-linejoin="round"/><path d="M742.08 228.33 C752.72 227.02 800.58 218.05 821.85 218.45 C843.12 218.85 880.35 227.98 901.62 231.30 C922.89 234.62 960.11 243.38 981.38 243.36 C1002.65 243.33 1039.88 232.73 1061.15 231.10 C1082.42 229.47 1130.28 231.10 1140.92 231.10" fill="none" stroke="#a3485f" stroke-width="1.8" stroke-linejoin="round"/><path d="M742.08 208.57 C752.72 208.57 800.58 211.78 821.85 208.57 C843.12 205.35 880.35 184.45 901.62 184.45 C922.89 184.45 960.11 205.35 981.38 208.57 C1002.65 211.78 1039.88 208.57 1061.15 208.57 C1082.42 208.57 1130.28 208.57 1140.92 208.57" fill="none" stroke="#d38a3c" stroke-width="1.8" stroke-linejoin="round"/><rect x="920.4" y="136.1" width="13.2" height="9.2" fill="#d4893a" stroke="#bf7a33" stroke-width="1"/></svg>
<div class="t" style="left:937.87px;top:136.50px;font-size:9.0px;color:#4a4a4a;font-weight:normal;font-family:'Liberation Sans', sans-serif;transform:scaleX(0.9434);transform-origin:0 0;">Costos Directos</div>
<svg class="ov" width="1200" height="650" viewBox="0 0 1200 650"><rect x="1004.5" y="136.1" width="13.2" height="9.2" fill="#b9c88e" stroke="#a3b478" stroke-width="1"/></svg>
<div class="t" style="left:1021.97px;top:136.50px;font-size:9.0px;color:#4a4a4a;font-weight:normal;font-family:'Liberation Sans', sans-serif;transform:scaleX(0.9390);transform-origin:0 0;">Gastos Personal</div>
<svg class="ov" width="1200" height="650" viewBox="0 0 1200 650"><rect x="1089.9" y="136.1" width="13.2" height="9.2" fill="#a24a63" stroke="#8e3d55" stroke-width="1"/></svg>
<div class="t" style="left:1107.38px;top:136.50px;font-size:9.0px;color:#4a4a4a;font-weight:normal;font-family:'Liberation Sans', sans-serif;transform:scaleX(0.9267);transform-origin:0 0;">Gastos Variables</div>
<svg class="ov" width="1200" height="650" viewBox="0 0 1200 650"><line x1="692.5" y1="568.38" x2="1180.9" y2="568.38" stroke="#d9d9d9" stroke-width="1"/><line x1="692.5" y1="541.25" x2="1180.9" y2="541.25" stroke="#d9d9d9" stroke-width="1"/><line x1="692.5" y1="514.12" x2="1180.9" y2="514.12" stroke="#d9d9d9" stroke-width="1"/><line x1="692.5" y1="487.00" x2="1180.9" y2="487.00" stroke="#d9d9d9" stroke-width="1"/><line x1="692.5" y1="459.88" x2="1180.9" y2="459.88" stroke="#d9d9d9" stroke-width="1"/><line x1="692.5" y1="432.75" x2="1180.9" y2="432.75" stroke="#d9d9d9" stroke-width="1"/><line x1="692.5" y1="405.62" x2="1180.9" y2="405.62" stroke="#d9d9d9" stroke-width="1"/><line x1="692.5" y1="378.50" x2="1180.9" y2="378.50" stroke="#d9d9d9" stroke-width="1"/><rect x="696.5" y="369.2" width="484.4" height="226.3" fill="none" stroke="#dadada" stroke-width="1"/><line x1="696.5" y1="369.2" x2="696.5" y2="595.5" stroke="#cfcfcf" stroke-width="1"/><line x1="692.5" y1="595.5" x2="1180.9" y2="595.5" stroke="#cfcfcf" stroke-width="1"/><line x1="694.5" y1="586.46" x2="696.5" y2="586.46" stroke="#cfcfcf" stroke-width="1"/><line x1="694.5" y1="577.42" x2="696.5" y2="577.42" stroke="#cfcfcf" stroke-width="1"/><line x1="694.5" y1="559.33" x2="696.5" y2="559.33" stroke="#cfcfcf" stroke-width="1"/><line x1="694.5" y1="550.29" x2="696.5" y2="550.29" stroke="#cfcfcf" stroke-width="1"/><line x1="694.5" y1="532.21" x2="696.5" y2="532.21" stroke="#cfcfcf" stroke-width="1"/><line x1="694.5" y1="523.17" x2="696.5" y2="523.17" stroke="#cfcfcf" stroke-width="1"/><line x1="694.5" y1="505.08" x2="696.5" y2="505.08" stroke="#cfcfcf" stroke-width="1"/><line x1="694.5" y1="496.04" x2="696.5" y2="496.04" stroke="#cfcfcf" stroke-width="1"/><line x1="694.5" y1="477.96" x2="696.5" y2="477.96" stroke="#cfcfcf" stroke-width="1"/><line x1="694.5" y1="468.92" x2="696.5" y2="468.92" stroke="#cfcfcf" stroke-width="1"/><line x1="694.5" y1="450.83" x2="696.5" y2="450.83" stroke="#cfcfcf" stroke-width="1"/><line x1="694.5" y1="441.79" x2="696.5" y2="441.79" stroke="#cfcfcf" stroke-width="1"/><line x1="694.5" y1="423.71" x2="696.5" y2="423.71" stroke="#cfcfcf" stroke-width="1"/><line x1="694.5" y1="414.67" x2="696.5" y2="414.67" stroke="#cfcfcf" stroke-width="1"/><line x1="694.5" y1="396.58" x2="696.5" y2="396.58" stroke="#cfcfcf" stroke-width="1"/><line x1="694.5" y1="387.54" x2="696.5" y2="387.54" stroke="#cfcfcf" stroke-width="1"/><line x1="736.9" y1="595.5" x2="736.9" y2="599.5" stroke="#cfcfcf" stroke-width="1"/><line x1="704.6" y1="595.5" x2="704.6" y2="597.5" stroke="#cfcfcf" stroke-width="1"/><line x1="720.7" y1="595.5" x2="720.7" y2="597.5" stroke="#cfcfcf" stroke-width="1"/><line x1="753.0" y1="595.5" x2="753.0" y2="597.5" stroke="#cfcfcf" stroke-width="1"/><line x1="769.2" y1="595.5" x2="769.2" y2="597.5" stroke="#cfcfcf" stroke-width="1"/><line x1="817.6" y1="595.5" x2="817.6" y2="599.5" stroke="#cfcfcf" stroke-width="1"/><line x1="785.3" y1="595.5" x2="785.3" y2="597.5" stroke="#cfcfcf" stroke-width="1"/><line x1="801.5" y1="595.5" x2="801.5" y2="597.5" stroke="#cfcfcf" stroke-width="1"/><line x1="833.7" y1="595.5" x2="833.7" y2="597.5" stroke="#cfcfcf" stroke-width="1"/><line x1="849.9" y1="595.5" x2="849.9" y2="597.5" stroke="#cfcfcf" stroke-width="1"/><line x1="898.3" y1="595.5" x2="898.3" y2="599.5" stroke="#cfcfcf" stroke-width="1"/><line x1="866.0" y1="595.5" x2="866.0" y2="597.5" stroke="#cfcfcf" stroke-width="1"/><line x1="882.2" y1="595.5" x2="882.2" y2="597.5" stroke="#cfcfcf" stroke-width="1"/><line x1="914.5" y1="595.5" x2="914.5" y2="597.5" stroke="#cfcfcf" stroke-width="1"/><line x1="930.6" y1="595.5" x2="930.6" y2="597.5" stroke="#cfcfcf" stroke-width="1"/><line x1="979.1" y1="595.5" x2="979.1" y2="599.5" stroke="#cfcfcf" stroke-width="1"/><line x1="946.8" y1="595.5" x2="946.8" y2="597.5" stroke="#cfcfcf" stroke-width="1"/><line x1="962.9" y1="595.5" x2="962.9" y2="597.5" stroke="#cfcfcf" stroke-width="1"/><line x1="995.2" y1="595.5" x2="995.2" y2="597.5" stroke="#cfcfcf" stroke-width="1"/><line x1="1011.4" y1="595.5" x2="1011.4" y2="597.5" stroke="#cfcfcf" stroke-width="1"/><line x1="1059.8" y1="595.5" x2="1059.8" y2="599.5" stroke="#cfcfcf" stroke-width="1"/><line x1="1027.5" y1="595.5" x2="1027.5" y2="597.5" stroke="#cfcfcf" stroke-width="1"/><line x1="1043.7" y1="595.5" x2="1043.7" y2="597.5" stroke="#cfcfcf" stroke-width="1"/><line x1="1075.9" y1="595.5" x2="1075.9" y2="597.5" stroke="#cfcfcf" stroke-width="1"/><line x1="1092.1" y1="595.5" x2="1092.1" y2="597.5" stroke="#cfcfcf" stroke-width="1"/><line x1="1140.5" y1="595.5" x2="1140.5" y2="599.5" stroke="#cfcfcf" stroke-width="1"/><line x1="1108.2" y1="595.5" x2="1108.2" y2="597.5" stroke="#cfcfcf" stroke-width="1"/><line x1="1124.4" y1="595.5" x2="1124.4" y2="597.5" stroke="#cfcfcf" stroke-width="1"/><line x1="1156.7" y1="595.5" x2="1156.7" y2="597.5" stroke="#cfcfcf" stroke-width="1"/><line x1="1172.8" y1="595.5" x2="1172.8" y2="597.5" stroke="#cfcfcf" stroke-width="1"/></svg>
<div class="t" style="left:683.14px;top:591.50px;font-size:9.0px;color:#505050;font-weight:normal;font-family:'Liberation Sans', sans-serif;">0</div>
<div class="t" style="left:683.22px;top:564.50px;font-size:9.0px;color:#505050;font-weight:normal;font-family:'Liberation Sans', sans-serif;">1</div>
<div class="t" style="left:683.24px;top:537.50px;font-size:9.0px;color:#505050;font-weight:normal;font-family:'Liberation Sans', sans-serif;">2</div>
<div class="t" style="left:683.18px;top:509.50px;font-size:9.0px;color:#505050;font-weight:normal;font-family:'Liberation Sans', sans-serif;">3</div>
<div class="t" style="left:683.05px;top:482.50px;font-size:9.0px;color:#505050;font-weight:normal;font-family:'Liberation Sans', sans-serif;">4</div>
<div class="t" style="left:683.16px;top:455.50px;font-size:9.0px;color:#505050;font-weight:normal;font-family:'Liberation Sans', sans-serif;">5</div>
<div class="t" style="left:683.18px;top:428.50px;font-size:9.0px;color:#505050;font-weight:normal;font-family:'Liberation Sans', sans-serif;">6</div>
<div class="t" style="left:683.24px;top:401.50px;font-size:9.0px;color:#505050;font-weight:normal;font-family:'Liberation Sans', sans-serif;">7</div>
<div class="t" style="left:683.18px;top:374.50px;font-size:9.0px;color:#505050;font-weight:normal;font-family:'Liberation Sans', sans-serif;">8</div>
<div class="t" style="left:721.09px;top:603.60px;font-size:8.8px;color:#4a4a4a;font-weight:normal;font-family:'Liberation Sans', sans-serif;transform:scaleX(0.9402);transform-origin:0 0;">1. Enero</div>
<div class="t" style="left:796.90px;top:603.60px;font-size:8.8px;color:#4a4a4a;font-weight:normal;font-family:'Liberation Sans', sans-serif;transform:scaleX(1.0180);transform-origin:0 0;">2. Febrero</div>
<div class="t" style="left:881.25px;top:603.60px;font-size:8.8px;color:#4a4a4a;font-weight:normal;font-family:'Liberation Sans', sans-serif;">3. Marzo</div>
<div class="t" style="left:965.11px;top:603.60px;font-size:8.8px;color:#4a4a4a;font-weight:normal;font-family:'Liberation Sans', sans-serif;transform:scaleX(1.0339);transform-origin:0 0;">4. Abril</div>
<div class="t" style="left:1043.69px;top:603.60px;font-size:8.8px;color:#4a4a4a;font-weight:normal;font-family:'Liberation Sans', sans-serif;transform:scaleX(1.0301);transform-origin:0 0;">5. Mayo</div>
<div class="t" style="left:1125.35px;top:603.60px;font-size:8.8px;color:#4a4a4a;font-weight:normal;font-family:'Liberation Sans', sans-serif;transform:scaleX(0.9832);transform-origin:0 0;">6. Junio</div>
<svg class="ov" width="1200" height="650" viewBox="0 0 1200 650"><rect x="712.72" y="389.89" width="48.3" height="205.61" fill="#33708f"/><rect x="712.72" y="392.06" width="48.3" height="203.44" fill="#a8739b"/><rect x="712.72" y="412.41" width="48.3" height="183.09" fill="#5a9c80"/><rect x="712.72" y="432.75" width="48.3" height="162.75" fill="#9b6d5b"/><rect x="712.72" y="446.31" width="48.3" height="149.19" fill="#acad52"/><rect x="712.72" y="459.88" width="48.3" height="135.62" fill="#ad4f9e"/><rect x="712.72" y="473.44" width="48.3" height="122.06" fill="#5a6a98"/><rect x="712.72" y="487.00" width="48.3" height="108.50" fill="#7b6390"/><rect x="712.72" y="514.12" width="48.3" height="81.38" fill="#7d9263"/><rect x="712.72" y="541.25" width="48.3" height="54.25" fill="#985a70"/><rect x="712.72" y="554.81" width="48.3" height="40.69" fill="#b5894e"/><rect x="712.72" y="568.38" width="48.3" height="27.12" fill="#c24b52"/><rect x="712.72" y="581.94" width="48.3" height="13.56" fill="#5b8b93"/><rect x="793.45" y="459.88" width="48.3" height="135.62" fill="#33708f"/><rect x="793.45" y="460.69" width="48.3" height="134.81" fill="#4ea0a9"/><rect x="793.45" y="475.34" width="48.3" height="120.16" fill="#a8739b"/><rect x="793.45" y="495.14" width="48.3" height="100.36" fill="#5a9c80"/><rect x="793.45" y="508.70" width="48.3" height="86.80" fill="#9b6d5b"/><rect x="793.45" y="522.26" width="48.3" height="73.24" fill="#acad52"/><rect x="793.45" y="535.83" width="48.3" height="59.67" fill="#5a6a98"/><rect x="793.45" y="537.72" width="48.3" height="57.78" fill="#7b6390"/><rect x="793.45" y="540.44" width="48.3" height="55.06" fill="#7d9263"/><rect x="793.45" y="541.25" width="48.3" height="54.25" fill="#985a70"/><rect x="793.45" y="554.81" width="48.3" height="40.69" fill="#b5894e"/><rect x="793.45" y="568.38" width="48.3" height="27.12" fill="#c24b52"/><rect x="793.45" y="581.94" width="48.3" height="13.56" fill="#5b8b93"/><rect x="874.18" y="453.09" width="48.3" height="142.41" fill="#33708f"/><rect x="874.18" y="454.45" width="48.3" height="141.05" fill="#4ea0a9"/><rect x="874.18" y="468.01" width="48.3" height="127.49" fill="#a8739b"/><rect x="874.18" y="481.57" width="48.3" height="113.93" fill="#5a9c80"/><rect x="874.18" y="495.14" width="48.3" height="100.36" fill="#9b6d5b"/><rect x="874.18" y="508.70" width="48.3" height="86.80" fill="#acad52"/><rect x="874.18" y="529.04" width="48.3" height="66.46" fill="#7b6390"/><rect x="874.18" y="531.76" width="48.3" height="63.74" fill="#7d9263"/><rect x="874.18" y="534.47" width="48.3" height="61.03" fill="#985a70"/><rect x="874.18" y="548.03" width="48.3" height="47.47" fill="#b5894e"/><rect x="874.18" y="568.38" width="48.3" height="27.12" fill="#c24b52"/><rect x="874.18" y="581.94" width="48.3" height="13.56" fill="#5b8b93"/><rect x="954.92" y="435.46" width="48.3" height="160.04" fill="#33708f"/><rect x="954.92" y="436.82" width="48.3" height="158.68" fill="#4ea0a9"/><rect x="954.92" y="451.20" width="48.3" height="144.30" fill="#a8739b"/><rect x="954.92" y="463.94" width="48.3" height="131.56" fill="#5a9c80"/><rect x="954.92" y="470.73" width="48.3" height="124.77" fill="#9b6d5b"/><rect x="954.92" y="484.29" width="48.3" height="111.21" fill="#acad52"/><rect x="954.92" y="497.85" width="48.3" height="97.65" fill="#ad4f9e"/><rect x="954.92" y="499.21" width="48.3" height="96.29" fill="#5a6a98"/><rect x="954.92" y="512.77" width="48.3" height="82.73" fill="#7b6390"/><rect x="954.92" y="540.44" width="48.3" height="55.06" fill="#7d9263"/><rect x="954.92" y="541.25" width="48.3" height="54.25" fill="#985a70"/><rect x="954.92" y="554.81" width="48.3" height="40.69" fill="#b5894e"/><rect x="954.92" y="568.38" width="48.3" height="27.12" fill="#c24b52"/><rect x="954.92" y="581.94" width="48.3" height="13.56" fill="#5b8b93"/><rect x="1035.65" y="421.90" width="48.3" height="173.60" fill="#33708f"/><rect x="1035.65" y="423.26" width="48.3" height="172.24" fill="#4ea0a9"/><rect x="1035.65" y="436.82" width="48.3" height="158.68" fill="#a8739b"/><rect x="1035.65" y="451.19" width="48.3" height="144.31" fill="#5a9c80"/><rect x="1035.65" y="464.49" width="48.3" height="131.01" fill="#9b6d5b"/><rect x="1035.65" y="478.05" width="48.3" height="117.45" fill="#acad52"/><rect x="1035.65" y="491.07" width="48.3" height="104.43" fill="#ad4f9e"/><rect x="1035.65" y="492.43" width="48.3" height="103.07" fill="#5a6a98"/><rect x="1035.65" y="506.53" width="48.3" height="88.97" fill="#7b6390"/><rect x="1035.65" y="519.55" width="48.3" height="75.95" fill="#985a70"/><rect x="1035.65" y="534.47" width="48.3" height="61.03" fill="#b5894e"/><rect x="1035.65" y="548.03" width="48.3" height="47.47" fill="#c24b52"/><rect x="1035.65" y="568.38" width="48.3" height="27.12" fill="#5b8b93"/><rect x="1116.38" y="421.90" width="48.3" height="173.60" fill="#33708f"/><rect x="1116.38" y="423.26" width="48.3" height="172.24" fill="#4ea0a9"/><rect x="1116.38" y="436.82" width="48.3" height="158.68" fill="#a8739b"/><rect x="1116.38" y="451.19" width="48.3" height="144.31" fill="#5a9c80"/><rect x="1116.38" y="464.49" width="48.3" height="131.01" fill="#9b6d5b"/><rect x="1116.38" y="478.05" width="48.3" height="117.45" fill="#acad52"/><rect x="1116.38" y="491.07" width="48.3" height="104.43" fill="#ad4f9e"/><rect x="1116.38" y="492.43" width="48.3" height="103.07" fill="#5a6a98"/><rect x="1116.38" y="506.53" width="48.3" height="88.97" fill="#7b6390"/><rect x="1116.38" y="533.11" width="48.3" height="62.39" fill="#7d9263"/><rect x="1116.38" y="534.47" width="48.3" height="61.03" fill="#985a70"/><rect x="1116.38" y="548.03" width="48.3" height="47.47" fill="#b5894e"/><rect x="1116.38" y="561.59" width="48.3" height="33.91" fill="#c24b52"/><rect x="1116.38" y="581.94" width="48.3" height="13.56" fill="#5b8b93"/></svg>
</body></html>
